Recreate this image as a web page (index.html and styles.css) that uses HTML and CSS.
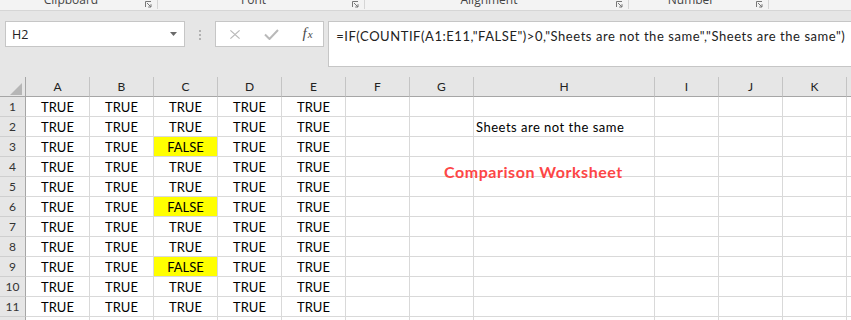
FILE: index.html
```html
<!DOCTYPE html>
<html lang="en">
<head>
	<meta charset="UTF-8">
	<title>Comparison Worksheet</title>
	<link rel="stylesheet" href="styles.css">
</head>
<body>
	<div id="ribbon">
		<div class="group" style="width: 158px;"><span class="glabel">Clipboard</span><svg class="launcher" viewBox="0 0 7 7"><path d="M0.5 6V0.5H6M2 2L6 6M6 3.2V6H3.2"/></svg></div>
		<div class="group" style="width: 207px;"><span class="glabel">Font</span><svg class="launcher" viewBox="0 0 7 7"><path d="M0.5 6V0.5H6M2 2L6 6M6 3.2V6H3.2"/></svg></div>
		<div class="group" style="width: 264px;"><span class="glabel">Alignment</span><svg class="launcher" viewBox="0 0 7 7"><path d="M0.5 6V0.5H6M2 2L6 6M6 3.2V6H3.2"/></svg></div>
		<div class="group" style="width: 140px;"><span class="glabel">Number</span><svg class="launcher" viewBox="0 0 7 7"><path d="M0.5 6V0.5H6M2 2L6 6M6 3.2V6H3.2"/></svg></div>
	</div>
	<div id="formulabar">
		<div id="namebox">
			<span id="cellref">H2</span>
			<svg id="droparrow" viewBox="0 0 7 4"><path d="M0 0H7L3.5 4Z"/></svg>
		</div>
		<div id="grip"><span></span><span></span><span></span></div>
		<div id="fbuttons">
			<svg class="fbtn" viewBox="0 0 12 12"><path d="M1 1.5L11 10.5M11 1.5L1 10.5"/></svg>
			<svg class="fbtn check" viewBox="0 0 15 11"><path d="M1 5.5L5.5 10L14 1"/></svg>
			<span id="fx"><i>f</i><i class="small">x</i></span>
		</div>
		<div id="forminput">=IF(COUNTIF(A1:E11,"FALSE")&gt;0,"Sheets are not the same","Sheets are the same")</div>
	</div>
	<div id="sheet">
		<div class="row head">
			<div class="rh corner"><svg viewBox="0 0 12 12"><path d="M12 0V12H0Z"/></svg></div>
			<div class="ch">A</div><div class="ch">B</div><div class="ch">C</div><div class="ch">D</div><div class="ch">E</div><div class="ch">F</div><div class="ch">G</div><div class="ch">H</div><div class="ch">I</div><div class="ch">J</div><div class="ch">K</div><div class="ch"></div>
		</div>
		<div class="row">
			<div class="rh">1</div>
			<div class="cell">TRUE</div><div class="cell">TRUE</div><div class="cell">TRUE</div><div class="cell">TRUE</div><div class="cell">TRUE</div>
			<div class="cell"></div><div class="cell"></div><div class="cell"></div><div class="cell"></div><div class="cell"></div><div class="cell"></div><div class="cell"></div>
		</div>
		<div class="row">
			<div class="rh">2</div>
			<div class="cell">TRUE</div><div class="cell">TRUE</div><div class="cell">TRUE</div><div class="cell">TRUE</div><div class="cell">TRUE</div>
			<div class="cell"></div><div class="cell"></div><div class="cell left">Sheets are not the same</div><div class="cell"></div><div class="cell"></div><div class="cell"></div><div class="cell"></div>
		</div>
		<div class="row">
			<div class="rh">3</div>
			<div class="cell">TRUE</div><div class="cell">TRUE</div><div class="cell hl">FALSE</div><div class="cell">TRUE</div><div class="cell">TRUE</div>
			<div class="cell"></div><div class="cell"></div><div class="cell"></div><div class="cell"></div><div class="cell"></div><div class="cell"></div><div class="cell"></div>
		</div>
		<div class="row">
			<div class="rh">4</div>
			<div class="cell">TRUE</div><div class="cell">TRUE</div><div class="cell">TRUE</div><div class="cell">TRUE</div><div class="cell">TRUE</div>
			<div class="cell"></div><div class="cell"></div><div class="cell"></div><div class="cell"></div><div class="cell"></div><div class="cell"></div><div class="cell"></div>
		</div>
		<div class="row">
			<div class="rh">5</div>
			<div class="cell">TRUE</div><div class="cell">TRUE</div><div class="cell">TRUE</div><div class="cell">TRUE</div><div class="cell">TRUE</div>
			<div class="cell"></div><div class="cell"></div><div class="cell"></div><div class="cell"></div><div class="cell"></div><div class="cell"></div><div class="cell"></div>
		</div>
		<div class="row">
			<div class="rh">6</div>
			<div class="cell">TRUE</div><div class="cell">TRUE</div><div class="cell hl">FALSE</div><div class="cell">TRUE</div><div class="cell">TRUE</div>
			<div class="cell"></div><div class="cell"></div><div class="cell"></div><div class="cell"></div><div class="cell"></div><div class="cell"></div><div class="cell"></div>
		</div>
		<div class="row">
			<div class="rh">7</div>
			<div class="cell">TRUE</div><div class="cell">TRUE</div><div class="cell">TRUE</div><div class="cell">TRUE</div><div class="cell">TRUE</div>
			<div class="cell"></div><div class="cell"></div><div class="cell"></div><div class="cell"></div><div class="cell"></div><div class="cell"></div><div class="cell"></div>
		</div>
		<div class="row">
			<div class="rh">8</div>
			<div class="cell">TRUE</div><div class="cell">TRUE</div><div class="cell">TRUE</div><div class="cell">TRUE</div><div class="cell">TRUE</div>
			<div class="cell"></div><div class="cell"></div><div class="cell"></div><div class="cell"></div><div class="cell"></div><div class="cell"></div><div class="cell"></div>
		</div>
		<div class="row">
			<div class="rh">9</div>
			<div class="cell">TRUE</div><div class="cell">TRUE</div><div class="cell hl">FALSE</div><div class="cell">TRUE</div><div class="cell">TRUE</div>
			<div class="cell"></div><div class="cell"></div><div class="cell"></div><div class="cell"></div><div class="cell"></div><div class="cell"></div><div class="cell"></div>
		</div>
		<div class="row">
			<div class="rh">10</div>
			<div class="cell">TRUE</div><div class="cell">TRUE</div><div class="cell">TRUE</div><div class="cell">TRUE</div><div class="cell">TRUE</div>
			<div class="cell"></div><div class="cell"></div><div class="cell"></div><div class="cell"></div><div class="cell"></div><div class="cell"></div><div class="cell"></div>
		</div>
		<div class="row">
			<div class="rh">11</div>
			<div class="cell">TRUE</div><div class="cell">TRUE</div><div class="cell">TRUE</div><div class="cell">TRUE</div><div class="cell">TRUE</div>
			<div class="cell"></div><div class="cell"></div><div class="cell"></div><div class="cell"></div><div class="cell"></div><div class="cell"></div><div class="cell"></div>
		</div>
		<div class="row">
			<div class="rh">12</div>
			<div class="cell"></div><div class="cell"></div><div class="cell"></div><div class="cell"></div><div class="cell"></div>
			<div class="cell"></div><div class="cell"></div><div class="cell"></div><div class="cell"></div><div class="cell"></div><div class="cell"></div><div class="cell"></div>
		</div>
		<div id="shape">Comparison Worksheet</div>
	</div>
</body>
</html>
```

FILE: styles.css
```css
*{
	box-sizing: border-box;
}
body{
	margin: 0;
	width: 851px;
	height: 320px;
	overflow: hidden;
	background-color: #e6e6e6;
	font-family: Lato, "Liberation Sans", sans-serif;
}
#ribbon{
	display: flex;
	height: 11px;
	overflow: hidden;
	background-color: #f3f3f3;
	border-bottom: 1px solid #d6d6d6;
}
.group{
	display: flex;
	height: 9px;
	border-right: 1px solid #d5d5d5;
}
.glabel{
	flex-grow: 1;
	text-align: center;
	margin-top: -6px;
	font-family: "Open Sans", sans-serif;
	font-size: 12px;
	line-height: 12px;
	color: #444;
}
.launcher{
	width: 7px;
	height: 7px;
	margin: 1px 5px 0 3px;
	fill: none;
	stroke: #777;
	stroke-width: 1;
}
#formulabar{
	display: flex;
	align-items: flex-start;
	height: 65px;
	padding-top: 10px;
	padding-left: 5px;
}
#namebox{
	display: flex;
	align-items: center;
	width: 182px;
	height: 26px;
	background-color: #fff;
	border: 1px solid #c6c6c6;
	padding-left: 6px;
	padding-right: 7px;
}
#cellref{
	flex-grow: 1;
	font-family: "Open Sans", sans-serif;
	font-size: 12.5px;
	color: #222;
}
#droparrow{
	width: 7px;
	height: 4px;
	fill: #6a6a6a;
}
#grip{
	display: flex;
	flex-direction: column;
	gap: 2px;
	width: 31px;
	padding-top: 9px;
	padding-left: 14px;
}
#grip span{
	width: 2px;
	height: 2px;
	background-color: #b2b2b2;
}
#fbuttons{
	display: flex;
	align-items: center;
	width: 110px;
	height: 26px;
	background-color: #fff;
	border: 1px solid #c6c6c6;
	padding-left: 13px;
}
.fbtn{
	width: 12px;
	height: 11px;
	fill: none;
	stroke: #b9b9b9;
	stroke-width: 1.4;
}
.fbtn.check{
	width: 15px;
	height: 11px;
	margin-left: 23px;
	stroke-width: 2;
}
#fx{
	margin-left: 23px;
	font-family: "Liberation Serif", serif;
	color: #4a4a4a;
	font-size: 15px;
	line-height: 15px;
}
#fx .small{
	font-size: 11px;
	margin-left: 1px;
}
#forminput{
	margin-left: 4px;
	width: 530px;
	height: 46px;
	background-color: #fff;
	border: 1px solid #c6c6c6;
	border-right: none;
	padding-left: 7px;
	padding-top: 6px;
	font-size: 13px;
	line-height: 17px;
	letter-spacing: 0.55px;
	color: #222;
	white-space: nowrap;
	overflow: hidden;
}
#sheet{
	position: relative;
	margin-top: 1px;
}
.row{
	display: grid;
	grid-template-columns: 26px repeat(7, 64px) 181px repeat(3, 64px) 64px;
	height: 20px;
}
.rh{
	background-color: #e6e6e6;
	border-right: 1px solid #a6a6a6;
	border-bottom: 1px solid #cfcfcf;
	text-align: center;
	font-size: 12px;
	line-height: 19px;
	color: #333;
}
.ch{
	background-color: #e6e6e6;
	border-right: 1px solid #c4c4c4;
	border-bottom: 1px solid #a6a6a6;
	text-align: center;
	font-size: 12px;
	padding-top: 1px;
	line-height: 18px;
	color: #222;
}
.head .rh{
	border-bottom: 1px solid #a6a6a6;
}
.corner svg{
	display: block;
	width: 12px;
	height: 12px;
	margin: 6px 0 0 10px;
	fill: #b6b6b6;
}
.cell{
	background-color: #fff;
	border-right: 1px solid #d9d9d9;
	border-bottom: 1px solid #d9d9d9;
	text-align: center;
	font-size: 13px;
	padding-top: 2px;
	line-height: 17px;
	color: #000;
	white-space: nowrap;
}
.cell.left{
	text-align: left;
	padding-left: 2px;
	letter-spacing: 0.5px;
}
.cell.hl{
	background-color: #ffff00;
}
#shape{
	position: absolute;
	left: 444px;
	top: 85px;
	font-size: 16px;
	font-weight: bold;
	line-height: 20px;
	letter-spacing: 0.55px;
	color: #fd4646;
}
```
